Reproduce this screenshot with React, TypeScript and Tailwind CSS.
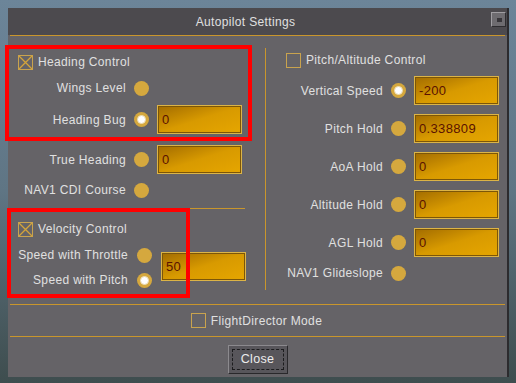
import type { ReactNode } from 'react'

const font = { fontFamily: '"Liberation Sans", Arial, sans-serif' }

function Radio({ on }: { on?: boolean }) {
    return (
        <div className="w-[15px] h-[15px] rounded-full bg-[#d5a83e] flex items-center justify-center shrink-0">
            {on && <div className="w-[9px] h-[9px] rounded-full bg-white border border-[#ecdcb4]" />}
        </div>
    )
}

function Check({ on }: { on?: boolean }) {
    return (
        <svg width="15" height="15" viewBox="0 0 15 15" className="shrink-0">
            <rect x="0.5" y="0.5" width="14" height="14" fill="none" stroke="#c9a34e" />
            {on && <path d="M1 1 L14 14 M14 1 L1 14" stroke="#d4a43a" strokeWidth="1.3" />}
        </svg>
    )
}

function Field({ value }: { value: string }) {
    return (
        <div className="w-[85px] h-[29px] border border-[#dcb446] shadow-[inset_0_0_0_1px_#7c5608] bg-linear-to-br from-[#a26c00] via-[#d89a00] to-[#e6a600] flex items-center pl-[4px] text-[13px] text-[#5a1200] shrink-0">
            {value}
        </div>
    )
}

function Row({ label, labelW, on, value, className }: { label: string; labelW: string; on?: boolean; value?: string; className: string }) {
    return (
        <div className={`flex items-center ${className}`}>
            <div className={`${labelW} text-right`}>{label}</div>
            <div className="ml-[8px]"><Radio on={on} /></div>
            {value !== undefined && <div className="ml-[8px]"><Field value={value} /></div>}
        </div>
    )
}

function Header({ on, children, className }: { on?: boolean; children: ReactNode; className: string }) {
    return (
        <div className={`flex items-center gap-[5px] h-[20px] ${className}`}>
            <Check on={on} />
            <span>{children}</span>
        </div>
    )
}

export default function App() {
    return (
        <div style={font} className="relative w-[516px] h-[383px] overflow-hidden bg-linear-to-b from-[#6c8599] via-[#5f7584] to-[#3e4d4e] pl-[8px] pt-[8px] text-[12px] tracking-[0.35px] text-[#e0e0e0]">
            <div className="w-[501px] h-[369px] bg-[#656367] border-r-2 border-[#2c2b2e] flex flex-col">
                <div className="h-[27px] bg-[#4c4a4e] flex items-center justify-center relative pr-[24px]">
                    Autopilot Settings
                    <div className="absolute right-[1px] top-[4px] w-[15px] h-[15px] bg-[#6e6c70] border-t border-l border-[#a09ea2] border-b border-r border-b-[#2e2d30] border-r-[#2e2d30] flex items-center justify-center">
                        <div className="w-[5px] h-[4px] bg-[#38363a] ml-[2px] mt-[1px]" />
                    </div>
                </div>
                <div className="h-px bg-[#c9962c] mx-[2px]" />

                <div className="h-[268px] flex">
                    <div className="w-[257px] flex flex-col">
                        <Header on className="mt-[16px] pl-[10px]">Heading Control</Header>
                        <Row label="Wings Level" labelW="w-[118px]" className="mt-[6px] h-[20px]" />
                        <Row label="Heading Bug" labelW="w-[118px]" on value="0" className="mt-[7px] h-[29px]" />
                        <Row label="True Heading" labelW="w-[118px]" value="0" className="mt-[11px] h-[29px]" />
                        <Row label="NAV1 CDI Course" labelW="w-[118px]" className="mt-[6px] h-[20px]" />
                        <div className="mt-[8px] h-px bg-[#c9962c] ml-[10px] mr-[20px]" />
                        <Header on className="mt-[10px] pl-[10px]">Velocity Control</Header>
                        <div className="flex mt-[6px]">
                            <div className="flex flex-col">
                                <div className="flex items-center h-[20px]">
                                    <div className="w-[120px] text-right">Speed with Throttle</div>
                                    <div className="ml-[9px]"><Radio /></div>
                                </div>
                                <div className="flex items-center h-[20px] mt-[5px]">
                                    <div className="w-[120px] text-right">Speed with Pitch</div>
                                    <div className="ml-[9px]"><Radio on /></div>
                                </div>
                            </div>
                            <div className="ml-[9px] mt-[7px]"><Field value="50" /></div>
                        </div>
                    </div>

                    <div className="w-px bg-[#c9962c] mt-[12px] h-[242px]" />

                    <div className="flex-1 flex flex-col">
                        <Header className="mt-[14px] pl-[20px]">Pitch/Altitude Control</Header>
                        <Row label="Vertical Speed" labelW="w-[117px]" on value="-200" className="mt-[6px] h-[29px]" />
                        <Row label="Pitch Hold" labelW="w-[117px]" value="0.338809" className="mt-[9px] h-[29px]" />
                        <Row label="AoA Hold" labelW="w-[117px]" value="0" className="mt-[9px] h-[29px]" />
                        <Row label="Altitude Hold" labelW="w-[117px]" value="0" className="mt-[9px] h-[29px]" />
                        <Row label="AGL Hold" labelW="w-[117px]" value="0" className="mt-[9px] h-[29px]" />
                        <Row label="NAV1 Glideslope" labelW="w-[117px]" className="mt-[6px] h-[20px]" />
                    </div>
                </div>

                <div className="h-px bg-[#c9962c] mx-[2px]" />
                <div className="h-[31px] flex items-center justify-center pr-[2px]">
                    <div className="flex items-center gap-[5px]">
                        <Check />
                        <span>FlightDirector Mode</span>
                    </div>
                </div>
                <div className="h-px bg-[#c9962c] mx-[2px]" />
                <div className="flex justify-center pt-[8px]">
                    <button className="w-[60px] h-[29px] bg-[#58565b] border border-t-[#8c8a8e] border-l-[#8c8a8e] border-b-[#29282b] border-r-[#29282b] p-[3px] text-[#ececec]">
                        <div className="w-full h-full border border-dashed border-[#1c1c1e] flex items-center justify-center text-[12.5px]">
                            Close
                        </div>
                    </button>
                </div>
            </div>

            <div className="absolute left-[5px] top-[45px] w-[247px] h-[96px] border-4 border-[#ff0000]" />
            <div className="absolute left-[7px] top-[208px] w-[183px] h-[90px] border-4 border-[#ff0000]" />
        </div>
    )
}
